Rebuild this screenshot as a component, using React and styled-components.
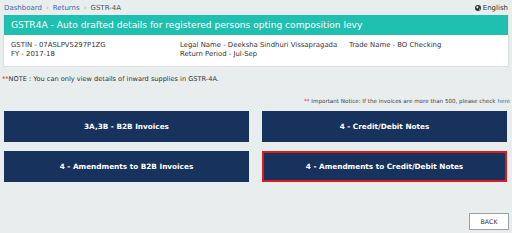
import React from 'react'
import styled, { createGlobalStyle } from 'styled-components'

const GlobalStyle = createGlobalStyle`
  body {
    margin: 0;
    background: #e8eded;
    font-family: 'DejaVu Sans', Verdana, sans-serif;
  }
`

const Page = styled.div`
  width: 512px;
  height: 233px;
  display: flex;
  flex-direction: column;
`

const TopBar = styled.div`
  height: 15px;
  display: flex;
  align-items: center;
  justify-content: space-between;
  padding: 0 4px;
  font-size: 7px;
`

const Crumbs = styled.div`
  display: flex;
  gap: 4px;
  color: #555;
  a {
    color: #3d6aa8;
    text-decoration: none;
  }
  i {
    font-style: normal;
    color: #aaa;
  }
`

const Lang = styled.div`
  display: flex;
  align-items: center;
  gap: 2px;
  color: #333;
`

const Panel = styled.div`
  margin: 0 3px;
  border: 1px solid #dcdfdf;
  border-top: none;
`

const Title = styled.div`
  background: #1fc0b0;
  color: #fff;
  height: 20px;
  display: flex;
  align-items: center;
  padding: 0 7px;
  font-size: 9.1px;
`

const Info = styled.div`
  background: #fff;
  height: 31px;
  padding: 6px 7px 0;
  box-sizing: border-box;
  display: grid;
  grid-template-columns: 169px 169px 1fr;
  font-size: 6.9px;
  color: #333;
  line-height: 9px;
`

const Note = styled.div`
  margin-top: 8px;
  padding: 0 2px;
  font-size: 6.6px;
  color: #333;
  span {
    color: #e02020;
  }
`

const Notice = styled.div`
  margin-top: 15px;
  padding-right: 2px;
  text-align: right;
  font-size: 5.6px;
  color: #444;
  span {
    color: #e02020;
  }
  a {
    color: #3d6aa8;
    text-decoration: none;
  }
`

const Grid = styled.div`
  margin: 7px 5px 0 4px;
  display: grid;
  grid-template-columns: 1fr 1fr;
  column-gap: 13px;
  row-gap: 9px;
`

const Tile = styled.button`
  height: 31px;
  background: #17335d;
  color: #fff;
  font-family: 'DejaVu Sans', Verdana, sans-serif;
  font-weight: bold;
  font-size: 7.3px;
  border: ${p => (p.$active ? '2px solid #e0191b' : '1px solid #17335d')};
  box-sizing: border-box;
  padding: 0;
  cursor: pointer;
`

const Footer = styled.div`
  margin-top: auto;
  padding: 0 3px 3px 0;
  display: flex;
  justify-content: flex-end;
`

const Back = styled.button`
  width: 40px;
  height: 17px;
  background: #fff;
  border: 1px solid #9aa0a4;
  color: #333;
  font-family: 'DejaVu Sans', Verdana, sans-serif;
  font-size: 6.3px;
  padding: 0;
`

const tiles = [
  '3A,3B - B2B Invoices',
  '4 - Credit/Debit Notes',
  '4 - Amendments to B2B Invoices',
  '4 - Amendments to Credit/Debit Notes'
]

const App = () => {
  return (
    <Page>
      <GlobalStyle />
      <TopBar>
        <Crumbs>
          <a href='#'>Dashboard</a>
          <i>›</i>
          <a href='#'>Returns</a>
          <i>›</i>
          <span>GSTR-4A</span>
        </Crumbs>
        <Lang>
          <svg width='6' height='6' viewBox='0 0 12 12'>
            <circle cx='6' cy='6' r='6' fill='#333' />
            <path d='M3 3 L6 2 L7 5 L5 7 L3 6 Z M8 7 L10 8 L8 10 Z' fill='#fff' />
          </svg>
          English
        </Lang>
      </TopBar>
      <Panel>
        <Title>GSTR4A - Auto drafted details for registered persons opting composition levy</Title>
        <Info>
          <div>
            GSTIN - 07ASLPV5297P1ZG
            <br />
            FY - 2017-18
          </div>
          <div>
            Legal Name - Deeksha Sindhuri Vissapragada
            <br />
            Return Period - Jul-Sep
          </div>
          <div>Trade Name - BO Checking</div>
        </Info>
      </Panel>
      <Note>
        <span>**</span>NOTE : You can only view details of inward supplies in GSTR-4A.
      </Note>
      <Notice>
        <span>**</span> Important Notice: If the invoices are more than 500, please check <a href='#'>here</a>
      </Notice>
      <Grid>
        {tiles.map((t, i) => (
          <Tile key={t} $active={i === 3}>
            {t}
          </Tile>
        ))}
      </Grid>
      <Footer>
        <Back>BACK</Back>
      </Footer>
    </Page>
  )
}

export default App
